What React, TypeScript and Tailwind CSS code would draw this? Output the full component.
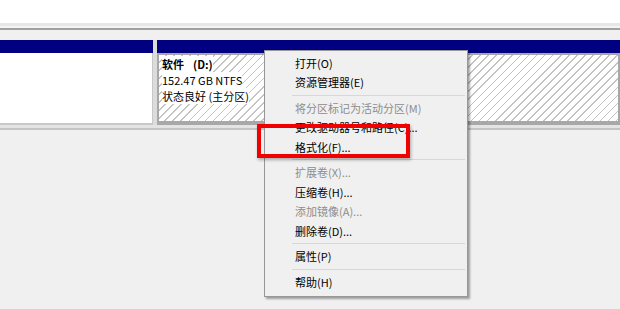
export default function App() {
  const items: ({ label: string; disabled?: boolean } | "sep")[] = [
    { label: "打开(O)" },
    { label: "资源管理器(E)" },
    "sep",
    { label: "将分区标记为活动分区(M)", disabled: true },
    { label: "更改驱动器号和路径(C)..." },
    { label: "格式化(F)..." },
    "sep",
    { label: "扩展卷(X)...", disabled: true },
    { label: "压缩卷(H)..." },
    { label: "添加镜像(A)...", disabled: true },
    { label: "删除卷(D)..." },
    "sep",
    { label: "属性(P)" },
    "sep",
    { label: "帮助(H)" },
  ];

  return (
    <div className="relative w-[620px] h-[309px] overflow-hidden bg-[#f0f0f0] text-[11px] text-black font-['Noto_Sans_CJK_SC',sans-serif]">
      {/* 顶部空白 + 分隔线 */}
      <div className="h-[23px] bg-white" />
      <div className="h-[3px] bg-[#e6e6e6]" />
      <div className="h-[2px] bg-[#f4f4f4]" />
      <div className="h-[2px] bg-[#a0a0a0]" />
      <div className="h-[10px] bg-[#f0f0f0]" />

      {/* 磁盘分区行 */}
      <div className="flex h-[85px]">
        <div className="w-[153px] flex flex-col">
          <div className="h-[13px] bg-[#000080]" />
          <div className="flex-1 bg-white border-r border-b-2 border-[#c8c8c8]" />
        </div>
        <div className="w-[4px] bg-[#dcdcdc]" />
        <div className="flex-1 flex flex-col">
          <div className="h-[13px] bg-[#000080]" />
          <div className="flex-1 border-2 border-b-4 border-[#a8a8a8] bg-[repeating-linear-gradient(135deg,#ffffff_0px,#ffffff_4.5px,#c4c4c4_4.5px,#c4c4c4_5.7px)] pl-[3px] pt-[1px] leading-[16px]">
            <div>
              <span className="bg-white font-bold">
                软件<span className="ml-[9px]">(D:)</span>
              </span>
            </div>
            <div><span className="bg-white">152.47 GB NTFS</span></div>
            <div><span className="bg-white">状态良好 (主分区)</span></div>
          </div>
        </div>
      </div>
      <div className="h-[3px] bg-[#e4e4e4]" />
      <div className="h-[2px] bg-[#c4c4c4]" />

      {/* 右键菜单 */}
      <div className="absolute left-[264px] top-[50px] w-[204px] h-[247px] bg-[#f0f0f0] border border-[#979797] shadow-[2px_2px_2px_rgba(0,0,0,0.35)] pt-[2px]">
        {items.map((it, i) =>
          it === "sep" ? (
            <div key={i} className="h-[6px] flex items-center pl-[27px] pr-[2px]">
              <div className="h-px w-full bg-[#d7d7d7]" />
            </div>
          ) : (
            <div
              key={i}
              className={`h-[19.5px] flex items-center pl-[30px] ${it.disabled ? "text-[#8d8d8d]" : "text-black"}`}
            >
              {it.label}
            </div>
          )
        )}
      </div>

      {/* 红色标注框 */}
      <div className="absolute left-[257px] top-[124px] w-[153px] h-[34px] border-4 border-[#f00000] shadow-[1px_2px_3px_rgba(0,0,0,0.3)]" />
    </div>
  );
}
